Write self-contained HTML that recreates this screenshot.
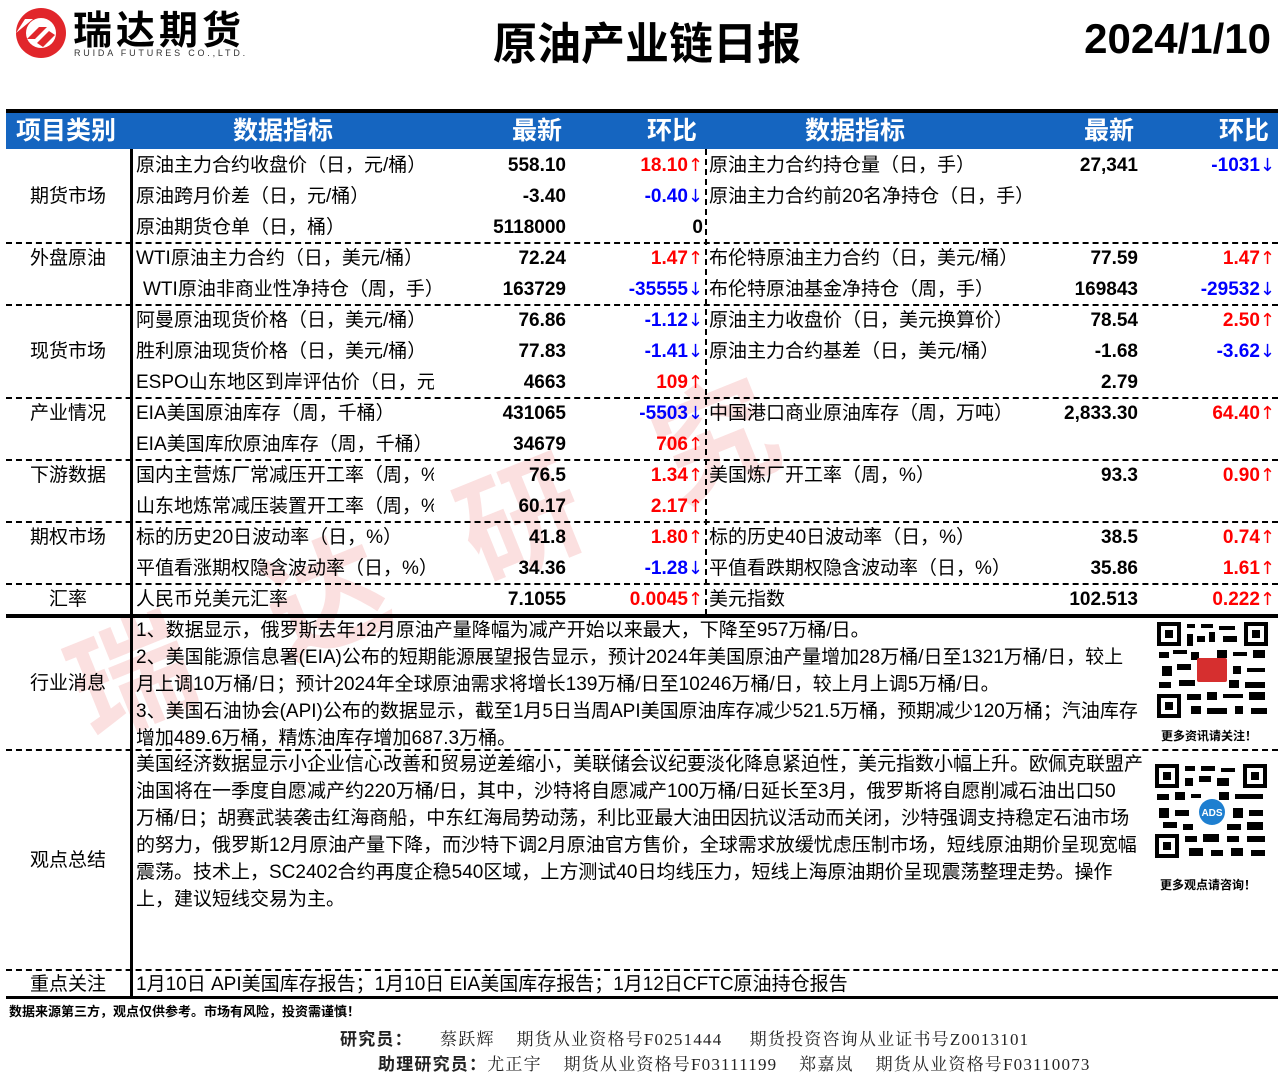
<!DOCTYPE html><html><head><meta charset="utf-8"><style>
body{margin:0;width:1283px;height:1076px;background:#fff;position:relative;overflow:hidden;font-family:"Liberation Sans","Noto Sans CJK SC",sans-serif;color:#000}
.a{position:absolute;white-space:nowrap}
.r{position:absolute;height:31px;line-height:31px;font-size:19px;white-space:nowrap}
.b{font-weight:bold}
.red{color:#f00;font-weight:bold}.blu{color:#00f;font-weight:bold}
.dh{position:absolute;height:0;border-top:2px dashed #000}
.ar{font-family:"DejaVu Sans",sans-serif;font-weight:normal;font-size:18px}
</style></head><body>
<!-- logo -->
<svg class="a" style="left:13px;top:5px" width="56" height="56" viewBox="0 0 56 56"><circle cx="28" cy="28" r="25" fill="#e1262b"/><circle cx="28" cy="28" r="15" fill="#fff"/><path d="M14 34 L26 22 L34 22 L22 34Z M24 38 L36 26 L42 30 L30 42Z" fill="#e1262b"/><path d="M3 28 L12 14 L20 14 Z" fill="#fff"/></svg>
<div class="a b" style="left:73px;top:4px;font-size:39px;letter-spacing:4px;font-family:'Noto Sans CJK SC',sans-serif;line-height:48px">瑞达期货</div>
<div class="a" style="left:74px;top:48px;font-size:9px;letter-spacing:2.8px;color:#333">RUIDA FUTURES CO.,LTD.</div>
<div class="a b" style="left:493px;top:12px;font-size:44px;line-height:56px;font-family:'Noto Sans CJK SC',sans-serif">原油产业链日报</div>
<div class="a b" style="right:12px;top:12px;font-size:42px;line-height:54px">2024/1/10</div>
<!-- watermark -->
<div class="a b" style="left:40px;top:610px;font-size:120px;color:rgba(230,60,60,0.16);transform:rotate(-22deg);transform-origin:0 0;letter-spacing:90px;font-family:'Noto Sans CJK SC',sans-serif">瑞达研究</div>
<!-- header -->
<div class="a" style="left:6px;top:109px;width:1272px;height:4px;background:#000"></div>
<div class="a" style="left:6px;top:113px;width:1272px;height:36px;background:#1565c0"></div>
<div class="a b" style="left:6px;top:113px;width:1272px;height:36px;line-height:36px;color:#fff;font-size:25px">
<span class="a" style="left:10px">项目类别</span><span class="a" style="left:227px">数据指标</span><span class="a" style="left:506px">最新</span><span class="a" style="left:641px">环比</span><span class="a" style="left:799px">数据指标</span><span class="a" style="left:1078px">最新</span><span class="a" style="left:1213px">环比</span></div>
<!-- vertical lines -->
<div class="a" style="left:130px;top:149px;width:3px;height:849px;background:#000"></div>
<div class="a" style="left:705px;top:149px;height:466px;border-left:2px dashed #000"></div>
<!-- categories -->
<div class="r" style="left:6px;width:124px;text-align:center;top:181px">期货市场</div>
<div class="r" style="left:6px;width:124px;text-align:center;top:243px">外盘原油</div>
<div class="r" style="left:6px;width:124px;text-align:center;top:336px">现货市场</div>
<div class="r" style="left:6px;width:124px;text-align:center;top:398px">产业情况</div>
<div class="r" style="left:6px;width:124px;text-align:center;top:460px">下游数据</div>
<div class="r" style="left:6px;width:124px;text-align:center;top:522px">期权市场</div>
<div class="r" style="left:6px;width:124px;text-align:center;top:584px">汇率</div>
<div class="r" style="left:6px;width:124px;text-align:center;top:668px">行业消息</div>
<div class="r" style="left:6px;width:124px;text-align:center;top:845px">观点总结</div>
<div class="r" style="left:6px;width:124px;text-align:center;top:969px">重点关注</div>
<!-- separators -->
<div class="dh" style="left:6px;width:1272px;top:242px"></div>
<div class="dh" style="left:6px;width:1272px;top:304px"></div>
<div class="dh" style="left:6px;width:1272px;top:397px"></div>
<div class="dh" style="left:6px;width:1272px;top:459px"></div>
<div class="dh" style="left:6px;width:1272px;top:521px"></div>
<div class="dh" style="left:6px;width:1272px;top:583px"></div>
<div class="a" style="left:6px;width:1272px;top:614px;height:4px;background:#000"></div>
<div class="dh" style="left:6px;width:1272px;top:749px"></div>
<div class="dh" style="left:6px;width:1272px;top:969px"></div>
<div class="a" style="left:6px;width:1272px;top:996px;height:3px;background:#000"></div>
<!-- rows: left -->
<div class="r" style="left:136px;top:150px">原油主力合约收盘价（日，元/桶）</div>
<div class="r" style="left:136px;top:181px">原油跨月价差（日，元/桶）</div>
<div class="r" style="left:136px;top:212px">原油期货仓单（日，桶）</div>
<div class="r" style="left:136px;top:243px">WTI原油主力合约（日，美元/桶）</div>
<div class="r" style="left:143px;top:274px">WTI原油非商业性净持仓（周，手）</div>
<div class="r" style="left:136px;top:305px">阿曼原油现货价格（日，美元/桶）</div>
<div class="r" style="left:136px;top:336px">胜利原油现货价格（日，美元/桶）</div>
<div class="r" style="left:136px;top:367px;width:298px;overflow:hidden">ESPO山东地区到岸评估价（日，元/</div>
<div class="r" style="left:136px;top:398px">EIA美国原油库存（周，千桶）</div>
<div class="r" style="left:136px;top:429px">EIA美国库欣原油库存（周，千桶）</div>
<div class="r" style="left:136px;top:460px;width:298px;overflow:hidden">国内主营炼厂常减压开工率（周，%</div>
<div class="r" style="left:136px;top:491px;width:298px;overflow:hidden">山东地炼常减压装置开工率（周，%</div>
<div class="r" style="left:136px;top:522px">标的历史20日波动率（日，%）</div>
<div class="r" style="left:136px;top:553px">平值看涨期权隐含波动率（日，%）</div>
<div class="r" style="left:136px;top:584px">人民币兑美元汇率</div>
<!-- values left -->
<div class="r b" style="right:717px;top:150px">558.10</div><div class="r red" style="right:580px;top:150px">18.10<span class="ar">↑</span></div>
<div class="r b" style="right:717px;top:181px">-3.40</div><div class="r blu" style="right:580px;top:181px">-0.40<span class="ar">↓</span></div>
<div class="r b" style="right:717px;top:212px">5118000</div><div class="r b" style="right:580px;top:212px">0</div>
<div class="r b" style="right:717px;top:243px">72.24</div><div class="r red" style="right:580px;top:243px">1.47<span class="ar">↑</span></div>
<div class="r b" style="right:717px;top:274px">163729</div><div class="r blu" style="right:580px;top:274px">-35555<span class="ar">↓</span></div>
<div class="r b" style="right:717px;top:305px">76.86</div><div class="r blu" style="right:580px;top:305px">-1.12<span class="ar">↓</span></div>
<div class="r b" style="right:717px;top:336px">77.83</div><div class="r blu" style="right:580px;top:336px">-1.41<span class="ar">↓</span></div>
<div class="r b" style="right:717px;top:367px">4663</div><div class="r red" style="right:580px;top:367px">109<span class="ar">↑</span></div>
<div class="r b" style="right:717px;top:398px">431065</div><div class="r blu" style="right:580px;top:398px">-5503<span class="ar">↓</span></div>
<div class="r b" style="right:717px;top:429px">34679</div><div class="r red" style="right:580px;top:429px">706<span class="ar">↑</span></div>
<div class="r b" style="right:717px;top:460px">76.5</div><div class="r red" style="right:580px;top:460px">1.34<span class="ar">↑</span></div>
<div class="r b" style="right:717px;top:491px">60.17</div><div class="r red" style="right:580px;top:491px">2.17<span class="ar">↑</span></div>
<div class="r b" style="right:717px;top:522px">41.8</div><div class="r red" style="right:580px;top:522px">1.80<span class="ar">↑</span></div>
<div class="r b" style="right:717px;top:553px">34.36</div><div class="r blu" style="right:580px;top:553px">-1.28<span class="ar">↓</span></div>
<div class="r b" style="right:717px;top:584px">7.1055</div><div class="r red" style="right:580px;top:584px">0.0045<span class="ar">↑</span></div>
<!-- right side -->
<div class="r" style="left:709px;top:150px">原油主力合约持仓量（日，手）</div>
<div class="r" style="left:709px;top:181px">原油主力合约前20名净持仓（日，手）</div>
<div class="r" style="left:709px;top:243px">布伦特原油主力合约（日，美元/桶）</div>
<div class="r" style="left:709px;top:274px">布伦特原油基金净持仓（周，手）</div>
<div class="r" style="left:709px;top:305px">原油主力收盘价（日，美元换算价）</div>
<div class="r" style="left:709px;top:336px">原油主力合约基差（日，美元/桶）</div>
<div class="r" style="left:709px;top:398px">中国港口商业原油库存（周，万吨）</div>
<div class="r" style="left:709px;top:460px">美国炼厂开工率（周，%）</div>
<div class="r" style="left:709px;top:522px">标的历史40日波动率（日，%）</div>
<div class="r" style="left:709px;top:553px">平值看跌期权隐含波动率（日，%）</div>
<div class="r" style="left:709px;top:584px">美元指数</div>
<div class="r b" style="right:145px;top:150px">27,341</div><div class="r blu" style="right:8px;top:150px">-1031<span class="ar">↓</span></div>
<div class="r b" style="right:145px;top:243px">77.59</div><div class="r red" style="right:8px;top:243px">1.47<span class="ar">↑</span></div>
<div class="r b" style="right:145px;top:274px">169843</div><div class="r blu" style="right:8px;top:274px">-29532<span class="ar">↓</span></div>
<div class="r b" style="right:145px;top:305px">78.54</div><div class="r red" style="right:8px;top:305px">2.50<span class="ar">↑</span></div>
<div class="r b" style="right:145px;top:336px">-1.68</div><div class="r blu" style="right:8px;top:336px">-3.62<span class="ar">↓</span></div>
<div class="r b" style="right:145px;top:367px">2.79</div>
<div class="r b" style="right:145px;top:398px">2,833.30</div><div class="r red" style="right:8px;top:398px">64.40<span class="ar">↑</span></div>
<div class="r b" style="right:145px;top:460px">93.3</div><div class="r red" style="right:8px;top:460px">0.90<span class="ar">↑</span></div>
<div class="r b" style="right:145px;top:522px">38.5</div><div class="r red" style="right:8px;top:522px">0.74<span class="ar">↑</span></div>
<div class="r b" style="right:145px;top:553px">35.86</div><div class="r red" style="right:8px;top:553px">1.61<span class="ar">↑</span></div>
<div class="r b" style="right:145px;top:584px">102.513</div><div class="r red" style="right:8px;top:584px">0.222<span class="ar">↑</span></div>
<!-- news -->
<div class="a" style="left:136px;top:617px;font-size:19px;line-height:27px">1、数据显示，俄罗斯去年12月原油产量降幅为减产开始以来最大，下降至957万桶/日。<br>2、美国能源信息署(EIA)公布的短期能源展望报告显示，预计2024年美国原油产量增加28万桶/日至1321万桶/日，较上<br>月上调10万桶/日；预计2024年全球原油需求将增长139万桶/日至10246万桶/日，较上月上调5万桶/日。<br>3、美国石油协会(API)公布的数据显示，截至1月5日当周API美国原油库存减少521.5万桶，预期减少120万桶；汽油库存<br>增加489.6万桶，精炼油库存增加687.3万桶。</div>
<div class="a" style="left:136px;top:751px;font-size:19px;line-height:27px">美国经济数据显示小企业信心改善和贸易逆差缩小，美联储会议纪要淡化降息紧迫性，美元指数小幅上升。欧佩克联盟产<br>油国将在一季度自愿减产约220万桶/日，其中，沙特将自愿减产100万桶/日延长至3月，俄罗斯将自愿削减石油出口50<br>万桶/日；胡赛武装袭击红海商船，中东红海局势动荡，利比亚最大油田因抗议活动而关闭，沙特强调支持稳定石油市场<br>的努力，俄罗斯12月原油产量下降，而沙特下调2月原油官方售价，全球需求放缓忧虑压制市场，短线原油期价呈现宽幅<br>震荡。技术上，SC2402合约再度企稳540区域，上方测试40日均线压力，短线上海原油期价呈现震荡整理走势。操作<br>上，建议短线交易为主。</div>
<div class="r" style="left:136px;top:969px;line-height:31px">1月10日 API美国库存报告；1月10日 EIA美国库存报告；1月12日CFTC原油持仓报告</div>
<!-- QR codes -->
<svg class="a" style="left:1157px;top:622px" width="111" height="96" viewBox="0 0 111 96"><rect width="111" height="96" fill="#fff"/><g fill="#000"><rect x="0" y="0" width="24" height="24"/><rect x="87" y="0" width="24" height="24"/><rect x="0" y="72" width="24" height="24"/></g><g fill="#fff"><rect x="4" y="4" width="16" height="16"/><rect x="91" y="4" width="16" height="16"/><rect x="4" y="76" width="16" height="16"/></g><g fill="#000"><rect x="8" y="8" width="8" height="8"/><rect x="95" y="8" width="8" height="8"/><rect x="8" y="80" width="8" height="8"/><rect x="30" y="2" width="8" height="4"/><rect x="44" y="2" width="12" height="4"/><rect x="62" y="4" width="16" height="4"/><rect x="30" y="12" width="6" height="12"/><rect x="40" y="14" width="8" height="6"/><rect x="52" y="10" width="6" height="10"/><rect x="66" y="14" width="14" height="6"/><rect x="2" y="30" width="10" height="6"/><rect x="16" y="28" width="14" height="4"/><rect x="34" y="30" width="8" height="8"/><rect x="60" y="28" width="10" height="8"/><rect x="76" y="30" width="14" height="4"/><rect x="96" y="28" width="12" height="8"/><rect x="5" y="44" width="10" height="10"/><rect x="20" y="42" width="14" height="6"/><rect x="76" y="44" width="8" height="8"/><rect x="90" y="46" width="18" height="4"/><rect x="2" y="60" width="12" height="6"/><rect x="22" y="58" width="16" height="6"/><rect x="72" y="58" width="10" height="8"/><rect x="88" y="60" width="20" height="6"/><rect x="30" y="72" width="14" height="6"/><rect x="50" y="70" width="10" height="8"/><rect x="66" y="72" width="20" height="4"/><rect x="92" y="70" width="16" height="8"/><rect x="34" y="84" width="10" height="8"/><rect x="50" y="86" width="20" height="6"/><rect x="78" y="84" width="8" height="8"/><rect x="94" y="86" width="16" height="6"/></g><rect x="40" y="36" width="30" height="24" rx="2" fill="#d62f2f"/></svg>
<div class="a b" style="left:1161px;top:727px;font-size:12px">更多资讯请关注！</div>
<svg class="a" style="left:1155px;top:764px" width="112" height="94" viewBox="0 0 112 94"><g fill="#000"><rect x="0" y="0" width="24" height="24"/><rect x="88" y="0" width="24" height="24"/><rect x="0" y="70" width="24" height="24"/></g><g fill="#fff"><rect x="4" y="4" width="16" height="16"/><rect x="92" y="4" width="16" height="16"/><rect x="4" y="74" width="16" height="16"/></g><g fill="#000"><rect x="8" y="8" width="8" height="8"/><rect x="96" y="8" width="8" height="8"/><rect x="8" y="78" width="8" height="8"/><rect x="30" y="2" width="10" height="5"/><rect x="46" y="2" width="14" height="5"/><rect x="66" y="4" width="14" height="4"/><rect x="30" y="14" width="8" height="8"/><rect x="44" y="12" width="12" height="6"/><rect x="62" y="14" width="12" height="8"/><rect x="2" y="30" width="12" height="6"/><rect x="20" y="28" width="10" height="8"/><rect x="36" y="30" width="10" height="4"/><rect x="64" y="28" width="10" height="8"/><rect x="80" y="30" width="28" height="5"/><rect x="4" y="44" width="10" height="10"/><rect x="20" y="46" width="14" height="6"/><rect x="78" y="44" width="10" height="10"/><rect x="94" y="46" width="14" height="6"/><rect x="8" y="58" width="14" height="6"/><rect x="28" y="60" width="10" height="6"/><rect x="72" y="60" width="14" height="6"/><rect x="92" y="58" width="16" height="8"/><rect x="30" y="72" width="12" height="6"/><rect x="48" y="70" width="16" height="8"/><rect x="72" y="72" width="12" height="6"/><rect x="92" y="72" width="18" height="6"/><rect x="34" y="84" width="14" height="8"/><rect x="56" y="86" width="12" height="6"/><rect x="76" y="84" width="12" height="8"/><rect x="96" y="86" width="14" height="6"/></g><circle cx="57" cy="48" r="13" fill="#1e7fd0"/><text x="57" y="52" font-size="10" fill="#fff" text-anchor="middle" font-family="Liberation Sans" font-weight="bold">ADS</text></svg>
<div class="a b" style="left:1160px;top:876px;font-size:12px">更多观点请咨询！</div>
<!-- footer -->
<div class="a b" style="left:9px;top:1001px;font-size:13px">数据来源第三方，观点仅供参考。市场有风险，投资需谨慎！</div>
<div class="a" style="left:340px;top:1025px;font-size:17px;letter-spacing:1.2px;font-family:'Liberation Serif','Noto Serif CJK SC',serif;color:#222"><b style="font-family:'Noto Sans CJK SC',sans-serif">研究员：</b>&nbsp;&nbsp;&nbsp;&nbsp;&nbsp;蔡跃辉&nbsp;&nbsp;&nbsp;&nbsp;期货从业资格号F0251444&nbsp;&nbsp;&nbsp;&nbsp;&nbsp;期货投资咨询从业证书号Z0013101</div>
<div class="a" style="left:378px;top:1050px;font-size:17px;letter-spacing:1.2px;font-family:'Liberation Serif','Noto Serif CJK SC',serif;color:#222"><b style="font-family:'Noto Sans CJK SC',sans-serif">助理研究员：</b>尤正宇&nbsp;&nbsp;&nbsp;&nbsp;期货从业资格号F03111199&nbsp;&nbsp;&nbsp;&nbsp;郑嘉岚&nbsp;&nbsp;&nbsp;&nbsp;期货从业资格号F03110073</div>
</body></html>
